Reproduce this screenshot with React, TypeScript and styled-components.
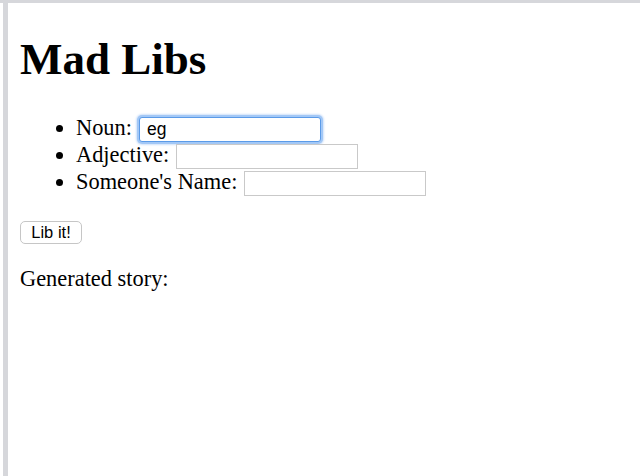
import React from "react";
import styled, { createGlobalStyle } from "styled-components";

const Global = createGlobalStyle`
  html, body { margin: 0; padding: 0; background: #ffffff; }
  body { font-family: "Liberation Serif", "Times New Roman", serif; color: #000; }
`;

const Frame = styled.div`
  border-top: 3px solid #d6d7db;
  min-height: 473px;
  box-sizing: border-box;
`;

const Page = styled.div`
  margin-left: 3px;
  border-left: 5px solid #d6d7db;
  padding-left: 12px;
  min-height: 473px;
  box-sizing: border-box;
  overflow: hidden;
`;

const Title = styled.h1`
  font-size: 45px;
  font-weight: bold;
  margin: 30px 0 30px;
  line-height: 52px;
`;

const List = styled.ul`
  margin: 0;
  padding-left: 56px;
  font-size: 22.4px;
  line-height: 26px;
`;

const Item = styled.li`
  display: list-item;
`;

const Field = styled.input<{ $focused?: boolean }>`
  width: 182px;
  height: 25px;
  box-sizing: border-box;
  vertical-align: 0;
  margin: 0 0 0 7px;
  padding: 0 7px;
  font-family: "Liberation Sans", Arial, sans-serif;
  font-size: 17.5px;
  color: #000;
  background: #fff;
  border: 1px solid ${(p) => (p.$focused ? "#5b9be8" : "#c9c9c9")};
  border-radius: ${(p) => (p.$focused ? "3px" : "0")};
  box-shadow: ${(p) => (p.$focused ? "0 0 0 2px #a3c8f6, 0 0 2px 3px #cfe1fa" : "none")};
  outline: none;
  caret-color: #000;
`;

const Button = styled.button`
  margin-top: 25px;
  height: 23px;
  width: 62px;
  padding: 0;
  font-family: "Liberation Sans", Arial, sans-serif;
  font-size: 16.5px;
  color: #000;
  background: #fff;
  border: 1px solid #c6c6c6;
  border-radius: 5px;
  display: block;
`;

const Story = styled.p`
  font-size: 22.4px;
  margin: 22px 0 0;
  line-height: 26px;
`;

export default function App() {
  return (
    <>
      <Global />
      <Frame>
        <Page>
          <Title>Mad Libs</Title>
          <List>
            <Item>
              Noun:<Field $focused defaultValue="eg" autoFocus />
            </Item>
            <Item>
              Adjective:<Field />
            </Item>
            <Item>
              Someone's Name:<Field />
            </Item>
          </List>
          <Button>Lib it!</Button>
          <Story>Generated story:</Story>
        </Page>
      </Frame>
    </>
  );
}
